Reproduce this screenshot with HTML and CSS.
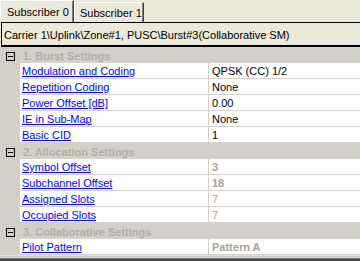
FILE: index.html
```html
<!DOCTYPE html>
<html>
<head>
<meta charset="utf-8">
<link rel="stylesheet" href="styles.css">
</head>
<body>
<div class="tabs">
  <div class="tab active">Subscriber 0</div>
  <div class="tab">Subscriber 1</div>
</div>
<div class="header">Carrier 1\Uplink\Zone#1, PUSC\Burst#3(Collaborative SM)</div>
<div class="grid">
  <div class="row cat"><span class="gut"><span class="box"></span></span><span class="cname">1. Burst Settings</span></div>
  <div class="row"><span class="gut"></span><span class="name">Modulation and Coding</span><span class="val">QPSK (CC) 1/2</span></div>
  <div class="row"><span class="gut"></span><span class="name">Repetition Coding</span><span class="val">None</span></div>
  <div class="row"><span class="gut"></span><span class="name">Power Offset [dB]</span><span class="val">0.00</span></div>
  <div class="row"><span class="gut"></span><span class="name">IE in Sub-Map</span><span class="val">None</span></div>
  <div class="row"><span class="gut"></span><span class="name">Basic CID</span><span class="val">1</span></div>
  <div class="row cat"><span class="gut"><span class="box"></span></span><span class="cname">2. Allocation Settings</span></div>
  <div class="row"><span class="gut"></span><span class="name">Symbol Offset</span><span class="val dis bold">3</span></div>
  <div class="row"><span class="gut"></span><span class="name">Subchannel Offset</span><span class="val dis bold">18</span></div>
  <div class="row"><span class="gut"></span><span class="name">Assigned Slots</span><span class="val dis">7</span></div>
  <div class="row"><span class="gut"></span><span class="name">Occupied Slots</span><span class="val dis">7</span></div>
  <div class="row cat"><span class="gut"><span class="box"></span></span><span class="cname">3. Collaborative Settings</span></div>
  <div class="row"><span class="gut"></span><span class="name">Pilot Pattern</span><span class="val dis bold">Pattern A</span></div>
</div>
<div class="bottom"></div>
</body>
</html>
```
FILE: styles.css
```css
html, body {
  margin: 0;
  padding: 0;
  background: #ECE9D8;
  font-family: "Liberation Sans", Arial, sans-serif;
  font-size: 11px;
  overflow: hidden;
  width: 360px;
  height: 261px;
}
.tabs {
  display: flex;
  align-items: flex-start;
  height: 22px;
}
.tab {
  box-sizing: border-box;
  height: 20px;
  margin-top: 2px;
  width: 70px;
  padding-left: 5px;
  padding-top: 2px;
  line-height: 17px;
  color: #000;
  white-space: nowrap;
  border-top: 1px solid #fff;
  border-left: 1px solid #fff;
  border-right: 1px solid #404040;
  box-shadow: inset -1px 0 #808080;
}
.tab.active {
  height: 22px;
  margin-top: 0;
  width: 74px;
  padding-left: 6px;
  padding-top: 2px;
  line-height: 18px;
}
.header {
  box-sizing: border-box;
  height: 25px;
  border-top: 1px solid #000;
  border-left: 1px solid #000;
  border-bottom: 2px solid #000;
  margin-left: 1px;
  padding-left: 2px;
  padding-top: 2px;
  line-height: 20px;
  white-space: nowrap;
  overflow: hidden;
  color: #000;
}
.grid {
  background: #D4D0C8;
}
.row {
  display: grid;
  grid-template-columns: 20px 188px 1fr;
  height: 16px;
  box-sizing: border-box;
}
.gut {
  background: #D4D0C8;
  position: relative;
}
.name, .val {
  box-sizing: border-box;
  height: 16px;
  background: #fff;
  border-bottom: 1px solid #D4D0C8;
  padding-top: 2px;
  line-height: 13px;
  white-space: nowrap;
  overflow: hidden;
}
.name {
  padding-left: 2px;
  color: #0000FF;
  text-decoration: underline;
}
.val {
  border-left: 1px solid #D4D0C8;
  padding-left: 3px;
  color: #000;
}
.val.dis {
  color: #A7A394;
}
.bold {
  font-weight: bold;
}
.cat {
  grid-template-columns: 20px 1fr;
  background: #D4D0C8;
}
.cname {
  font-weight: bold;
  color: #B2AEA2;
  padding-top: 2px;
  line-height: 14px;
  padding-left: 3px;
  white-space: nowrap;
}
.box {
  position: absolute;
  left: 6px;
  top: 5px;
  width: 9px;
  height: 9px;
  box-sizing: border-box;
  border: 1px solid #000;
}
.box::after {
  content: "";
  position: absolute;
  left: 1px;
  top: 3px;
  width: 5px;
  height: 1px;
  background: #000;
}
.bottom {
  height: 6px;
  box-sizing: border-box;
  background: #D4D0C8;
  border-top: 1px solid #E4E1D6;
  border-bottom: 2px solid #404040;
  box-shadow: inset 0 -1px #808080;
}
```
